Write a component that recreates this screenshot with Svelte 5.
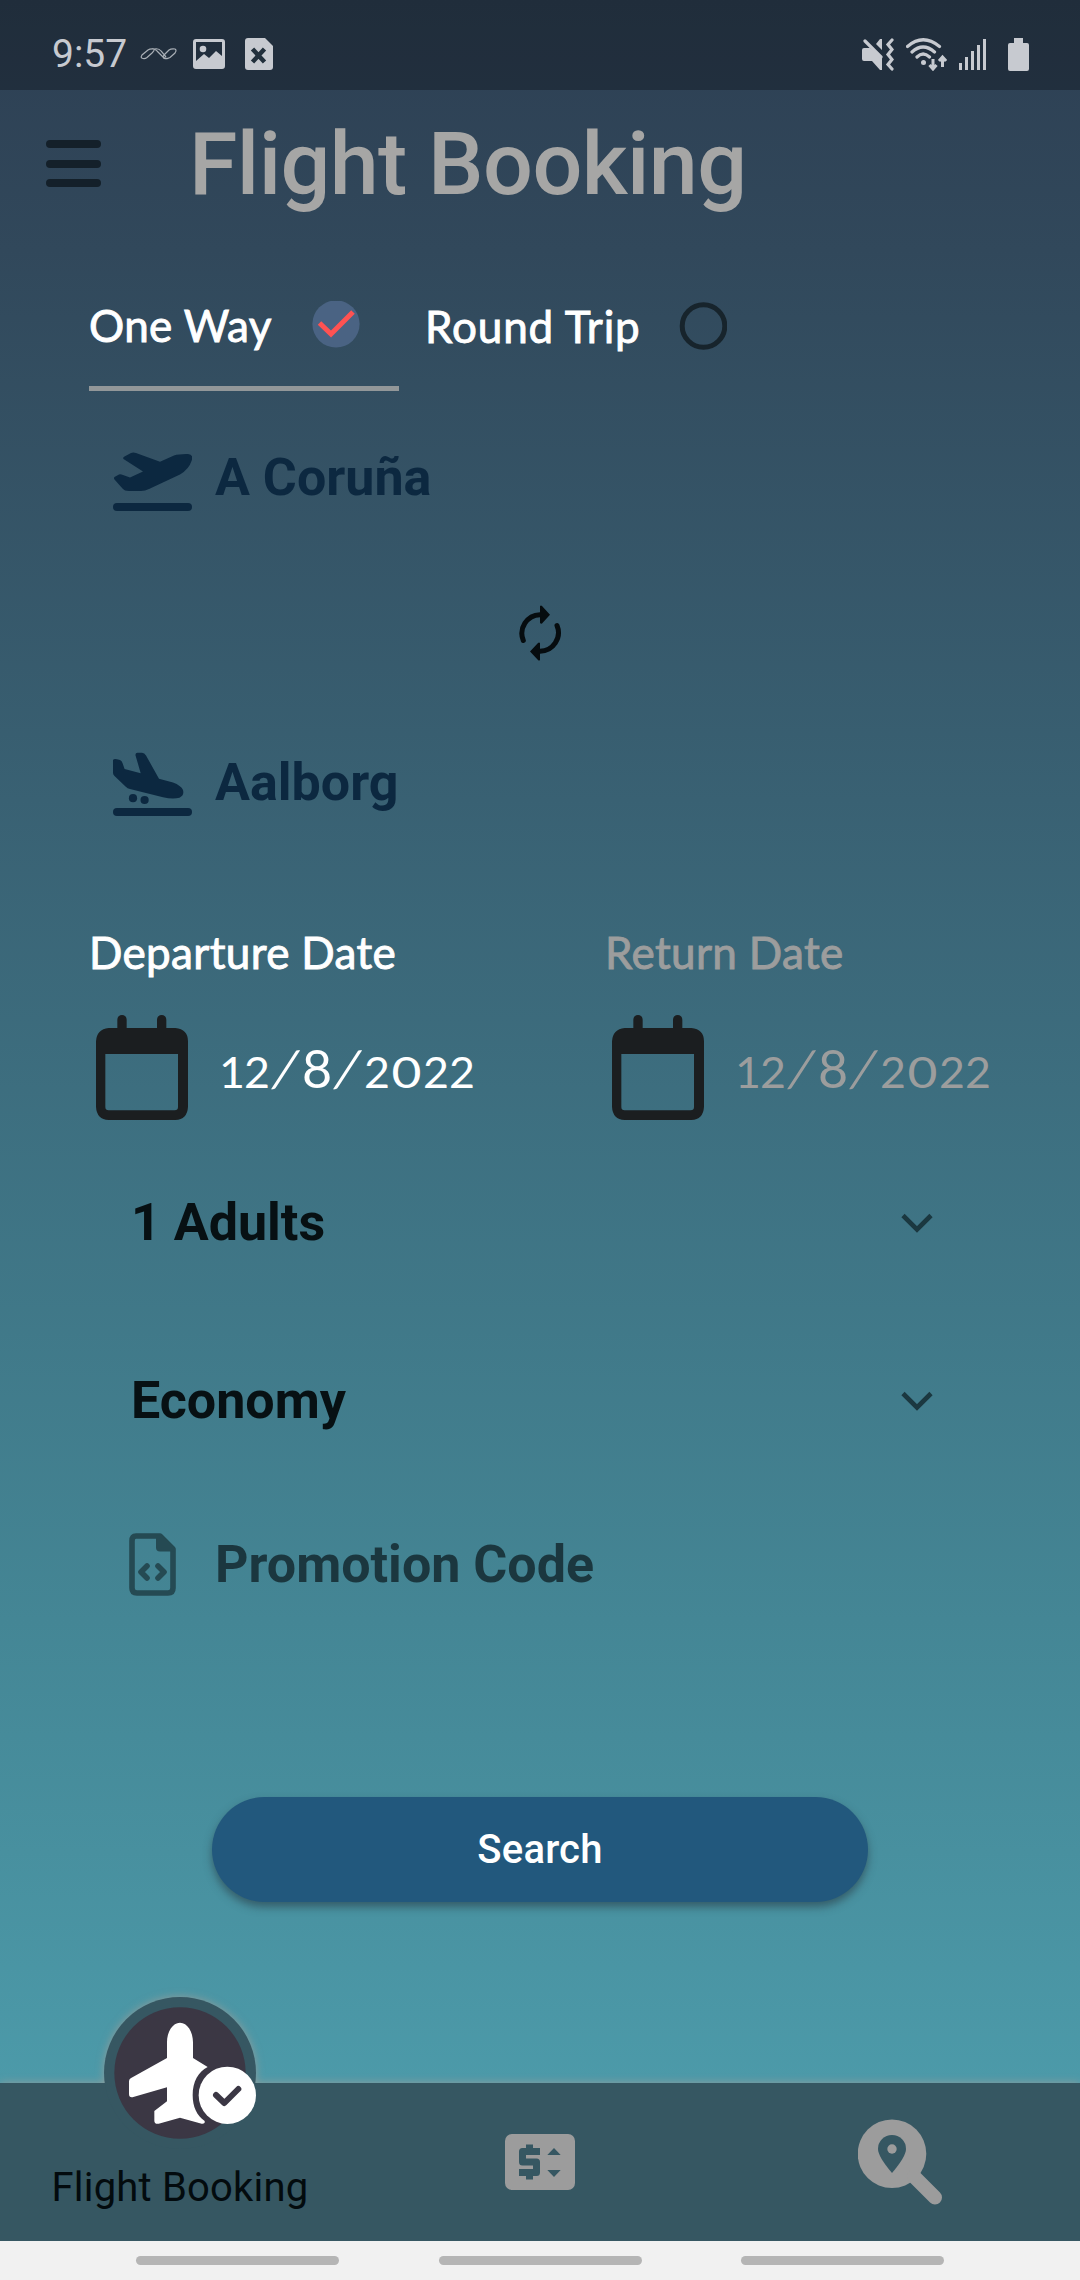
<script>
  const dates = [
    { label: 'Departure Date', value: '12/8/2022', muted: false },
    { label: 'Return Date', value: '12/8/2022', muted: true }
  ];
  const selects = ['1 Adults', 'Economy'];
  // Old-style numerals: 0, 1 and 2 sit at x-height.
  const kinds = { '/': 'slash', '0': 'low zero', '1': 'low one', '2': 'low' };
</script>

<div class="screen">
  <div class="status">
    <span class="time">9:57</span>
    <svg class="wave" width="38" height="12" viewBox="0 0 38 12"><path d="M3 10.500Q0 10 2 7L8 2Q10 .5 14 1Q15 2 12 5L7 9.500Q5 11 3 10.500ZM12 1Q15 .5 17 3L23 9Q25 11 28 10.500M14 1Q19 0 21 3L26 9M24 10.500Q22 9 25 6L29 2Q31 .5 35 1Q37 2 35 5L30 9.500Q27 11 24 10.500" /></svg>
    <svg class="photo" width="32" height="30" viewBox="0 0 32 30"><path fill-rule="evenodd" d="M3 0H29Q32 0 32 3V27Q32 30 29 30H3Q0 30 0 27V3Q0 0 3 0ZM3 3V22L11 15L16 19L23 12L29 17V3Z" /><circle cx="10" cy="10" r="3.3" /></svg>
    <svg class="doc" width="28" height="32" viewBox="0 0 28 32"><path d="M3 0H20L28 8V29Q28 32 25 32H3Q0 32 0 29V3Q0 0 3 0Z" /><path class="cut" d="M7.500 11L19.500 24M19.500 11L7.500 24" /></svg>
    <span class="spacer"></span>
    <svg class="mute" width="32" height="33" viewBox="0 0 32 33"><path d="M2 10H8L20 19V32H18L10 23H2Q0 23 0 21V12Q0 10 2 10ZM20 1V12L14 6L18 1Z" /><path class="line" d="M3 3L19 19M30 2L26 6.500L30 11.500L26 16.500L30 21.500L26 26.500L30 31" /></svg>
    <svg class="wifi" width="41" height="33" viewBox="0 0 41 33"><path class="line" d="M1.5 8.5Q17 -5 33.500 8.500M6 14Q17 4 28.500 14M11 19Q17 13 23.500 19" /><circle cx="17.500" cy="24.500" r="2.500" /><path class="thin" d="M27 21V30M23.500 27L27 31L30.500 27M36.500 29V20M33 23L36.500 19L40 23" /></svg>
    <svg class="signal" width="27" height="31" viewBox="0 0 27 31"><path d="M0 24h3v7h-3zM6 18h3v13h-3zM12 12h3v19h-3zM18 6h3v25h-3zM24 0h3v31h-3z" /></svg>
    <svg width="21" height="33" viewBox="0 0 21 33"><path d="M6 0H15V5H19Q21 5 21 7V31Q21 33 19 33H2Q0 33 0 31V7Q0 5 2 5H6Z" /></svg>
  </div>

  <header>
    <div class="menu"><i></i><i></i><i></i></div>
    <h1>Flight Booking</h1>
  </header>

  <div class="trips">
    <div class="trip active">
      <span class="ral oneway">One Way</span>
      <svg width="48" height="48" viewBox="0 0 48 48"><circle cx="24" cy="23" r="23.600" fill="#4a6383" /><path d="M7.500 22L19 33L41 11" fill="none" stroke="#ff5252" stroke-width="5" /></svg>
    </div>
    <div class="trip second">
      <span class="ral round">Round Trip</span>
      <svg width="48" height="48" viewBox="0 0 48 48"><circle cx="24.500" cy="24" r="21.300" fill="none" stroke="#17242c" stroke-width="5" /></svg>
    </div>
  </div>

  <div class="city from">
    <svg width="79" height="80" viewBox="113 437 79 80"><path d="M114.500 477L119 474.500Q120.500 474 123 475L130 477.500L143 471.500L123.500 459Q122.500 457.500 124.500 456.500L131 453Q133 452 136 453L160 461.800L174 455.500Q179 453.800 188 454Q194 454.500 191.500 461Q189 469 180 474.500L149 489Q145 491 141 491H129Q124.500 491 122.500 488.500L114.500 479.500Q113.500 478 114.500 477Z" /><rect x="113" y="503" width="79" height="8" rx="4" /></svg>
    <span>A Coruña</span>
  </div>

  <svg class="swap" width="44" height="56" viewBox="518 604.500 44 56"><path d="M523.300 640A18.700 18.700 0 0 1 540 614.200M557 625A18.700 18.700 0 0 1 540 650.800" fill="none" stroke="#060c0f" stroke-width="5" stroke-linecap="round" /><path d="M540 605.500Q541 604.500 542 605.500L550 614.200L542 623Q541 623.500 540 622.500ZM540 642.500Q539 641.500 538 642.500L530 651L538 659.500Q539 660.500 540 659.500Z" fill="#060c0f" /></svg>

  <div class="city to">
    <svg width="79" height="80" viewBox="113 742 79 80"><path d="M113 760Q114 758.500 117 759.300L120 760Q122 761 122.500 763L124.600 769L140.700 773.200L135.400 755Q135.500 752.800 137.500 752.800H142Q144.500 753 146 755.500L159 778.700L173 782.500Q181 785.500 183 790Q184.500 795.500 179.500 797.700Q173 799.500 163 797.300L130 789Q127.500 788.500 125.500 786.500L114.500 776Q113 774.500 113 773Z" /><circle cx="133" cy="798.200" r="4.100" /><circle cx="144.600" cy="800" r="4.100" /><rect x="113" y="808" width="79" height="8" rx="4" /></svg>
    <span>Aalborg</span>
  </div>

  <div class="dates">
    {#each dates as d}
      <div class="date" class:muted={d.muted}>
        <div class="ral label">{d.label}</div>
        <div class="value">
          <svg width="92" height="105" viewBox="108 315 276 315"><path fill-rule="evenodd" d="M146 354H172V329A14 14 0 0 1 200 329V354H291V329A14 14 0 0 1 319 329V354H346Q384 358 384 394V590Q382 628 346 630H146Q110 628 108 590V394Q110 358 146 354ZM136 432V591Q136 601 146 601H344Q354 601 354 591V432Z" /></svg>
          <span class="digits">{#each d.value.split('') as c}<span class={kinds[c] ?? 'tall'}>{c}</span>{/each}</span>
        </div>
      </div>
    {/each}
  </div>

  {#each selects as s}
    <div class="select">
      <span>{s}</span>
      <svg width="32" height="22" viewBox="0 0 32 22"><path d="M2 4.500L16 18.500L30 4.500" fill="none" stroke="#1b3840" stroke-width="4.600" /></svg>
    </div>
  {/each}

  <div class="promo">
    <svg width="47" height="68" viewBox="129 1532.500 47 68"><path d="M136 1538H160L173 1551V1590Q173 1595 168 1595H137Q132 1595 132 1590V1543Q132 1538 136 1538ZM147 1568L141 1574L147 1580M158 1568L164 1574L158 1580" transform="translate(0 .5)" fill="none" stroke="#254a53" stroke-width="5.600" stroke-linejoin="round" stroke-linecap="round" /><path d="M156 1538H162L175 1551V1554H160Q156 1554 156 1550Z" fill="#254a53" /></svg>
    <span>Promotion Code</span>
  </div>

  <button>Search</button>

  <nav>
    <div class="tab current">
      <div class="bubble">
        <svg width="152" height="152" viewBox="222 81 456 456"><circle cx="450" cy="309" r="228" fill="#365762" /><circle cx="450" cy="309" r="197" fill="#3b3744" /><path d="M450 158C472 158 489 185 489 217V264L533 291C505 305 488 335 488 375C488 410 500 437 524 453Q526 462 515 461L450 443L386 461Q373 463 373 452V423L411 394V352L310 381Q297 384 297 372V334Q297 328 302 325L411 264V217C411 185 428 158 450 158Z" fill="#fff" /><circle cx="592" cy="376" r="86" fill="#fff" /><path d="M558 375L583 399L625 357" fill="none" stroke="#3b3744" stroke-width="18" stroke-linecap="round" stroke-linejoin="round" /></svg>
      </div>
      <span>Flight Booking</span>
    </div>
    <div class="tab">
      <svg width="70" height="56" viewBox="505 2134 70 56"><rect x="505" y="2134" width="70" height="56" rx="7" fill="#9c9c9c" /><path d="M540 2151.500H522.500V2162H536.500V2172.500H519M529.500 2144.500V2151M529.500 2173V2179.500" fill="none" stroke="#365762" stroke-width="7" stroke-linejoin="round" /><path d="M547.300 2155L554 2148L560.700 2155ZM547.300 2170H560.700L554 2177Z" fill="#365762" /></svg>
    </div>
    <div class="tab">
      <svg width="84" height="86" viewBox="858 2119.500 84 86"><circle cx="892" cy="2154.300" r="34.300" fill="#9c9c9c" /><path d="M914 2177L935 2198" stroke="#9c9c9c" stroke-width="14" stroke-linecap="round" /><path d="M892 2173.500Q878 2157 878 2149.500A14 14 0 0 1 906 2149.500Q906 2157 892 2173.500Z" fill="#365762" /><circle cx="892" cy="2149.500" r="4.700" fill="#9c9c9c" /></svg>
    </div>
  </nav>
  <div class="gestures"><i></i><i></i><i></i></div>
</div>

<style>
  :global(body) { margin: 0; }
  .screen {
    width: 1080px;
    height: 2280px;
    display: flex;
    flex-direction: column;
    overflow: hidden;
    font-family: Roboto, sans-serif;
    background: linear-gradient(#2d3f53 0, #31485b 250px, #396173 800px, #448695 1620px, #4c9aa9 2083px);
  }
  svg { display: block; flex: none; }
  .status {
    height: 90px;
    box-sizing: border-box;
    padding: 18px 51px 0 52px;
    display: flex;
    align-items: center;
    background: rgba(0, 0, 0, 0.28);
    color: #c7cad0;
    fill: #c7cad0;
  }
  .time { font-size: 39px; width: 88px; line-height: 42px; }
  .wave { fill: none; stroke: #a9afb6; stroke-width: 1.2; }
  .photo { margin-left: 15px; }
  .doc { margin-left: 20px; }
  .cut { stroke: #22303c; stroke-width: 4.500; }
  .spacer { flex: 1; }
  .line { fill: none; stroke: #c7cad0; stroke-width: 3.2; stroke-linecap: round; }
  .thin { fill: none; stroke: #c7cad0; stroke-width: 3; }
  .mute { margin-right: 12px; }
  .wifi { margin-right: 12px; }
  .signal { margin-right: 22px; }
  header { height: 148px; padding-left: 46px; display: flex; align-items: center; }
  .menu { width: 55px; display: flex; flex-direction: column; gap: 11.500px; margin: 0 88px 1px 0; }
  .menu i { height: 8px; border-radius: 4px; background: #14202a; }
  h1 { margin: 0; font-size: 88px; font-weight: 500; line-height: 100px; letter-spacing: -0.6px; color: #a6a6a5; }
  .trips { height: 153px; padding-left: 89px; display: flex; }
  .trip { box-sizing: border-box; display: flex; align-items: center; justify-content: space-between; }
  .active { width: 310px; padding: 26px 39px 0 0; border-bottom: 5px solid #929799; }
  .second { width: 302px; margin-left: 26px; padding-top: 22px; }
  .ral {
    font-family: Lato, sans-serif;
    font-size: 44px;
    font-weight: 400;
    letter-spacing: 0.35px;
    color: #fff;
    -webkit-text-stroke: 0.9px currentColor;
    white-space: nowrap;
  }
  .ral.round { letter-spacing: 0.85px; }
  .city, .promo { height: 80px; padding-left: 113px; display: flex; align-items: center; font-size: 52px; font-weight: 700; color: #0c2840; fill: #0c2840; }
  .city svg { margin-right: 23px; }
  .from { margin-top: 46px; }
  .swap { margin: 87.500px auto 0; }
  .to { margin-top: 81.500px; }
  .dates { margin-top: 100px; padding-left: 89px; display: grid; grid-template-columns: 516px 1fr; }
  .label { line-height: 60px; height: 60px; }
  .value { margin-top: 33px; padding-left: 7px; height: 105px; display: flex; align-items: center; fill: #1b1e20; }
  .digits { display: flex; align-items: baseline; margin-left: 32px; font-family: Lato, sans-serif; font-size: 52px; color: #fff; }
  .digits span { display: flex; justify-content: center; width: 30px; }
  .digits .low { font-size: 43px; width: 26px; transform: scaleX(1.04); }
  .digits .one { width: 24px; }
  .digits .zero { width: 33px; transform: scaleX(1.2); }
  .digits .slash { width: 32px; font-size: 50px; transform: translateY(-1px) skewX(-14deg); }
  .muted .ral, .muted .digits { color: #9c9d9d; }
  .select { height: 80px; margin-top: 98px; padding: 0 147px 0 131px; display: flex; align-items: center; justify-content: space-between; font-size: 52px; font-weight: 700; color: #071013; }
  .dates + .select { margin-top: 62px; }
  .promo { margin-top: 84px; padding-left: 129px; color: #1b373f; }
  .promo svg { margin-right: 39px; }
  button {
    margin: 193px auto 0;
    width: 656px;
    height: 105px;
    flex: none;
    border: 0;
    border-radius: 53px;
    background: #22587d;
    color: #fff;
    font: 500 40px Roboto, sans-serif;
    letter-spacing: 0.2px;
    box-shadow: 0 5px 8px rgba(40, 60, 70, 0.6);
  }
  nav {
    margin-top: auto;
    height: 158px;
    display: grid;
    grid-template-columns: repeat(3, 360px);
    background: #365762;
    filter: drop-shadow(0 0 4px rgba(160, 155, 150, 0.8));
  }
  .tab { display: flex; align-items: center; justify-content: center; position: relative; }
  .current { font-size: 40px; letter-spacing: 0.2px; color: #030b0e; padding-top: 50px; }
  .bubble { position: absolute; left: 104px; top: -86px; }
  .gestures { position: relative; height: 39px; flex: none; background: #f1f1f1; display: flex; align-items: center; gap: 99.500px; padding-left: 136px; }
  .gestures i { width: 203px; height: 9px; border-radius: 5px; background: #b5b5b5; }
</style>
